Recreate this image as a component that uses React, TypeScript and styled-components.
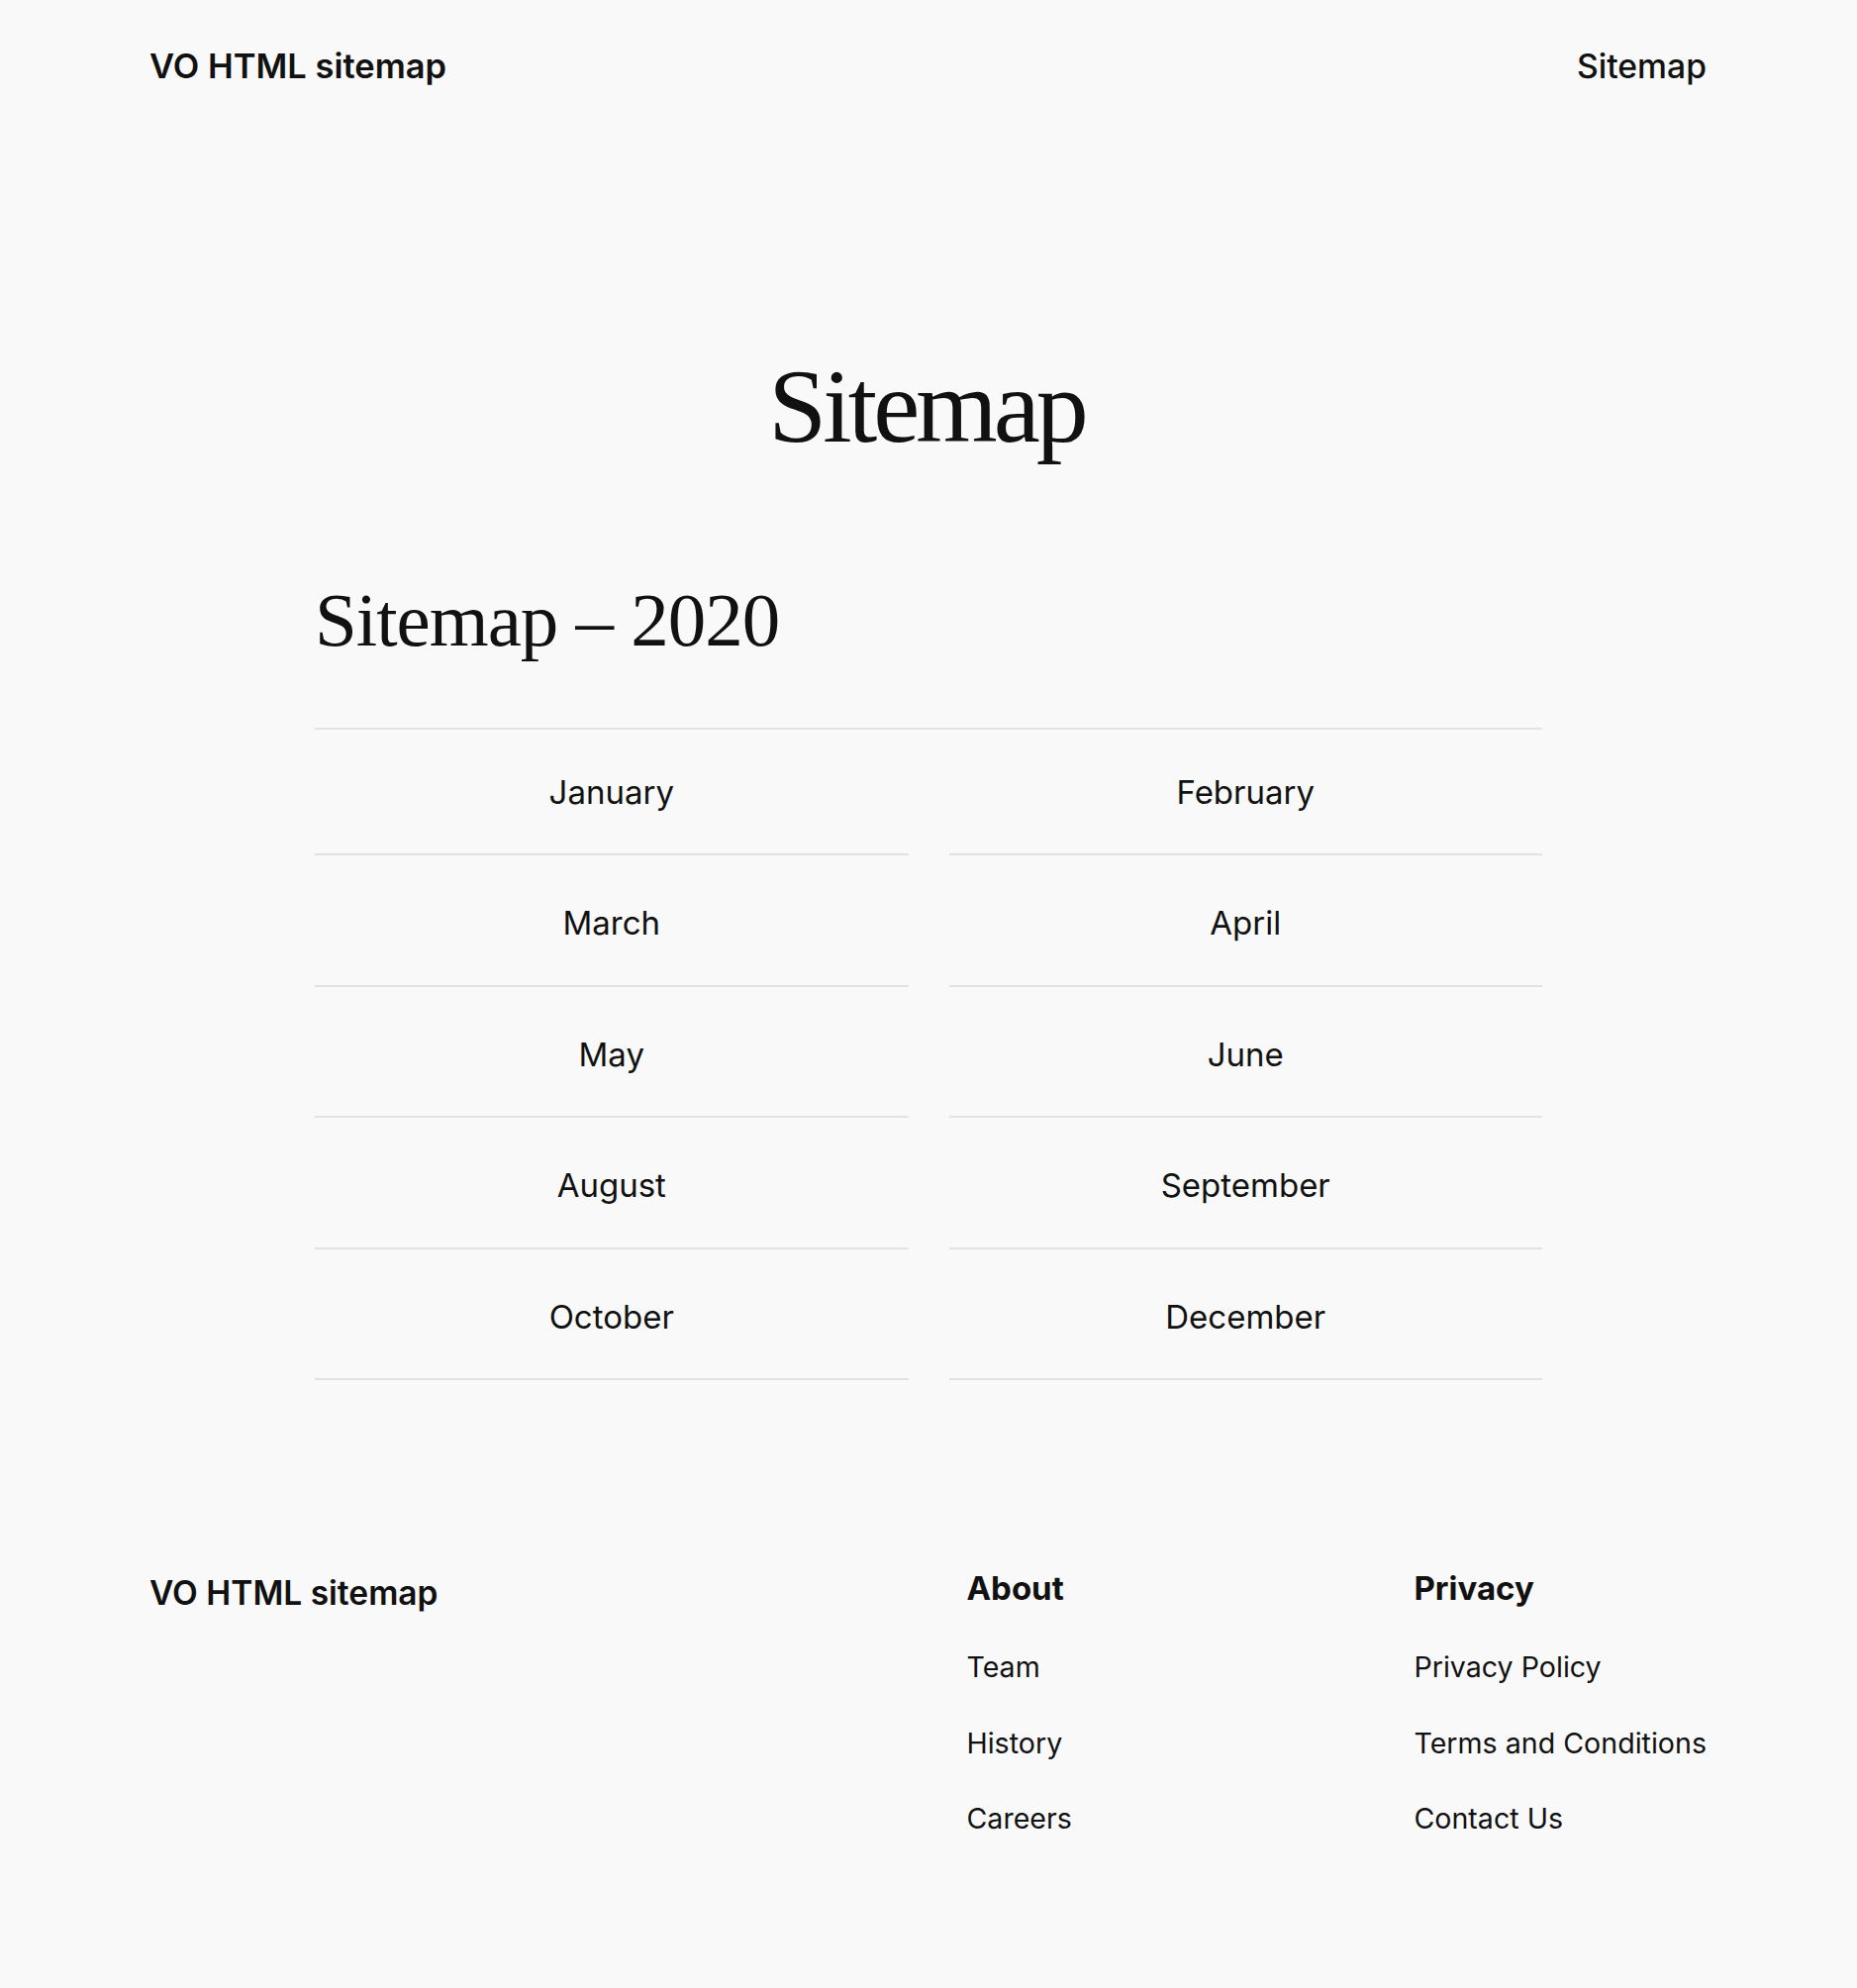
import styled, { createGlobalStyle } from 'styled-components'

const GlobalStyle = createGlobalStyle`
  body {
    margin: 0;
    background: #f9f9f9;
    color: #111111;
    font-family: 'Inter', 'Noto Sans', sans-serif;
  }
  a {
    color: inherit;
    text-decoration: none;
  }
`

const Page = styled.div`
  display: flex;
  flex-direction: column;
`

const Header = styled.header`
  height: 132px;
  padding: 0 152px 0 151px;
  display: flex;
  align-items: center;
  justify-content: space-between;
`

const Brand = styled.a<{ $size?: number }>`
  font-size: ${(p) => p.$size ?? 34.5}px;
  font-weight: 600;
`

const NavLink = styled.a`
  font-size: 33.7px;
  font-weight: 500;
`

const Main = styled.main`
  width: 1240px;
  margin: 0 auto;
`

const Title = styled.h1`
  margin: 226px 0 0;
  font-family: 'Liberation Serif', 'Times New Roman', serif;
  font-size: 106px;
  font-weight: 400;
  line-height: 1;
  letter-spacing: -4px;
  text-align: center;
  padding-right: 4px;
`

const YearTitle = styled.h2`
  margin: 124px 0 0;
  padding-bottom: 70px;
  border-bottom: 2px solid #e2e2e2;
  font-family: 'Liberation Serif', 'Times New Roman', serif;
  font-size: 77px;
  font-weight: 400;
  line-height: 1;
  letter-spacing: -1px;
`

const MonthGrid = styled.ul`
  list-style: none;
  margin: 0;
  padding: 0;
  display: grid;
  grid-template-columns: 1fr 1fr;
  column-gap: 41px;
`

const Month = styled.li`
  padding: 48.3px 0 42.2px;
  border-bottom: 2px solid #e2e2e2;
  text-align: center;
  font-size: 33px;
  line-height: 40px;

  &:nth-child(-n + 2) {
    padding-top: 43px;
  }
`

const Footer = styled.footer`
  margin-top: 190px;
  padding: 0 152px 154px 151px;
  display: flex;
  justify-content: space-between;
  align-items: flex-start;
`

const FooterBrand = styled(Brand)`
  margin-top: 5px;
`

const FooterNav = styled.div`
  display: grid;
  grid-template-columns: 452px auto;
`

const FooterColumn = styled.div`
  display: flex;
  flex-direction: column;
  gap: 43px;
`

const ColumnTitle = styled.h3`
  margin: 0;
  font-size: 33px;
  font-weight: 650;
  line-height: normal;
`

const FooterLink = styled.a`
  font-size: 28.6px;
  line-height: 33.5px;
`

const months = [
  'January',
  'February',
  'March',
  'April',
  'May',
  'June',
  'August',
  'September',
  'October',
  'December',
]

const footerColumns = [
  { title: 'About', links: ['Team', 'History', 'Careers'] },
  { title: 'Privacy', links: ['Privacy Policy', 'Terms and Conditions', 'Contact Us'] },
]

function App() {
  return (
    <Page>
      <GlobalStyle />
      <Header>
        <Brand href='#'>VO HTML sitemap</Brand>
        <NavLink href='#'>Sitemap</NavLink>
      </Header>

      <Main>
        <Title>Sitemap</Title>
        <YearTitle>Sitemap – 2020</YearTitle>
        <MonthGrid>
          {months.map((month) => (
            <Month key={month}>
              <a href='#'>{month}</a>
            </Month>
          ))}
        </MonthGrid>
      </Main>

      <Footer>
        <FooterBrand href='#' $size={33.5}>
          VO HTML sitemap
        </FooterBrand>
        <FooterNav>
          {footerColumns.map((col) => (
            <FooterColumn key={col.title}>
              <ColumnTitle>{col.title}</ColumnTitle>
              {col.links.map((link) => (
                <FooterLink key={link} href='#'>
                  {link}
                </FooterLink>
              ))}
            </FooterColumn>
          ))}
        </FooterNav>
      </Footer>
    </Page>
  )
}

export default App
